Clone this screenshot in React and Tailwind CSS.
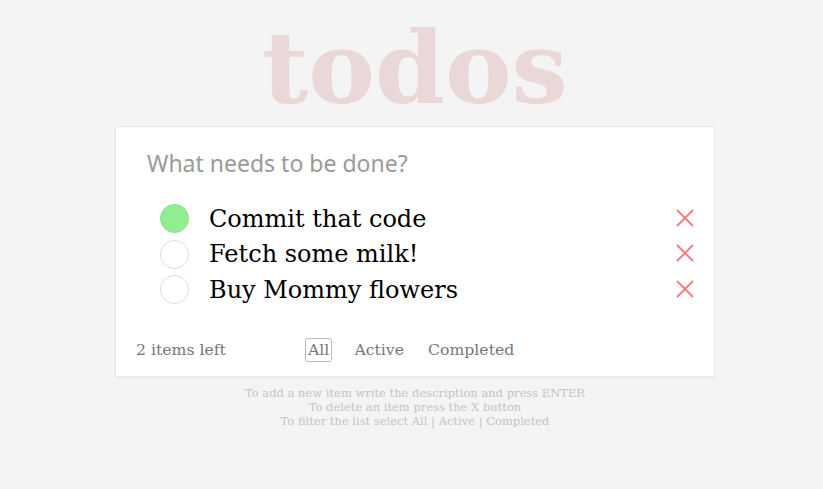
import React, { useState } from 'react';

const initialTodos = [
  { id: 1, text: 'Commit that code', done: true },
  { id: 2, text: 'Fetch some milk!', done: false },
  { id: 3, text: 'Buy Mommy flowers', done: false },
];

const XIcon = () => (
  <svg width="20" height="20" viewBox="0 0 20 20" fill="none" stroke="#f08080" strokeWidth="2" className="-mt-[2px]">
    <path d="M2 2L18 18M18 2L2 18" />
  </svg>
);

const App = () => {
  const [todos] = useState(initialTodos);
  const left = todos.filter(t => !t.done).length;

  return (
    <div className="min-h-screen bg-[#f4f4f4] pl-[7px] flex flex-col items-center font-['DejaVu_Serif',serif]">
      <h1 className="mt-[12px] text-[100px] leading-[112px] font-bold text-[#ead7d8]">todos</h1>

      <div className="mt-[2px] w-[600px] bg-white border border-[#e8e8e8] shadow-[0_1px_2px_rgba(0,0,0,0.04)]">
        <div className="pl-[31px] pt-[19px] h-[74px] text-[23px] text-[#9a9a9a] font-['Noto_Sans',sans-serif]">
          What needs to be done?
        </div>

        <ul className="flex flex-col">
          {todos.map(todo => (
            <li key={todo.id} className="flex items-center h-[35.5px] pl-[44px] pr-[19px]">
              <span
                className={
                  todo.done
                    ? 'w-[29px] h-[29px] rounded-full bg-[#90ee90] border border-[#8ce08c]'
                    : 'w-[29px] h-[29px] rounded-full bg-white border border-[#dddddd]'
                }
              />
              <span className="ml-[20px] flex-1 text-[24px] text-black">{todo.text}</span>
              <XIcon />
            </li>
          ))}
        </ul>

        <div className="flex items-center h-[52px] mt-[16px] pl-[20px] text-[15.7px] text-[#777777]">
          <span className="w-[169px]">{left} items left</span>
          <span className="px-[2px] border border-[#bbbbbb] rounded-[3px] leading-[22px]">All</span>
          <span className="ml-[22px]">Active</span>
          <span className="ml-[24px]">Completed</span>
        </div>
      </div>

      <div className="mt-[9px] text-center text-[11.5px] leading-[14px] text-[#c4c4c4]">
        <p>To add a new item write the description and press ENTER</p>
        <p>To delete an item press the X button</p>
        <p>To filter the list select All | Active | Completed</p>
      </div>
    </div>
  );
};

export default App;
